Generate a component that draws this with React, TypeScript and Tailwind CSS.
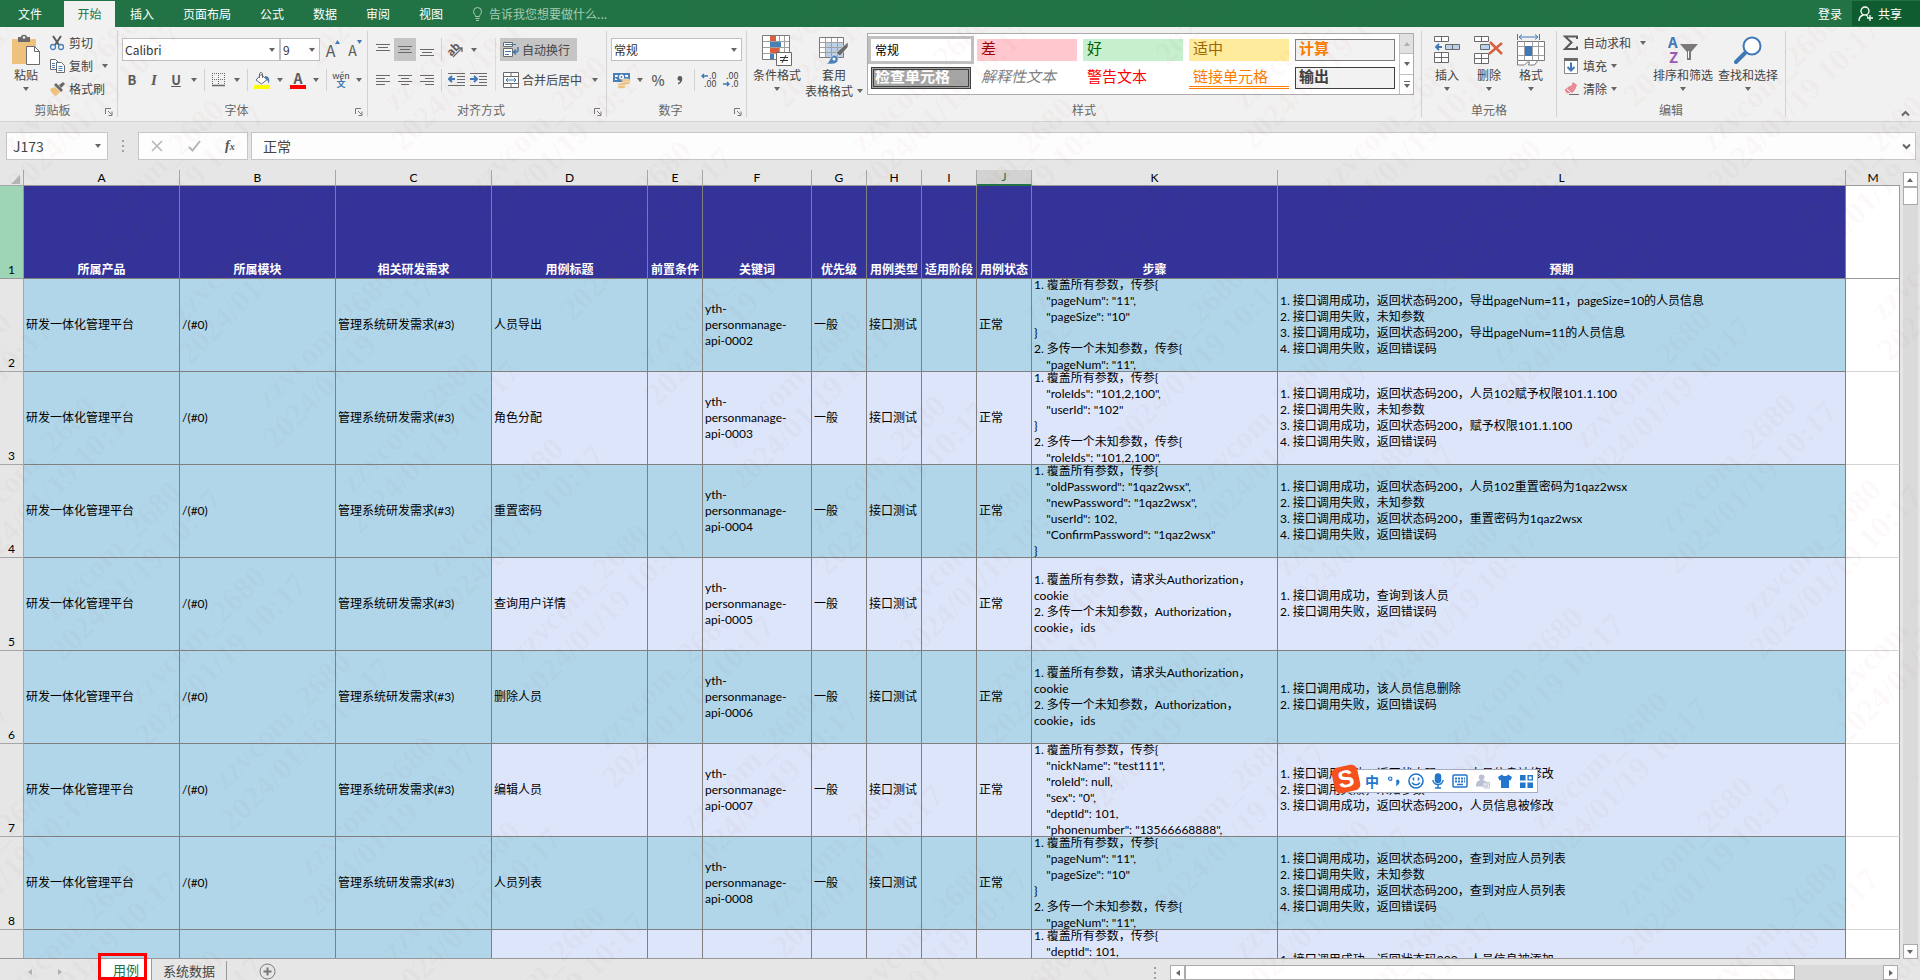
import React from 'react';

const TABS = ['插入', '页面布局', '公式', '数据', '审阅', '视图'];

const COLUMNS = [
  { letter: 'A', title: '所属产品', width: 'w-[156px]' },
  { letter: 'B', title: '所属模块', width: 'w-[156px]' },
  { letter: 'C', title: '相关研发需求', width: 'w-[156px]' },
  { letter: 'D', title: '用例标题', width: 'w-[156px]' },
  { letter: 'E', title: '前置条件', width: 'w-[55px]' },
  { letter: 'F', title: '关键词', width: 'w-[109px]' },
  { letter: 'G', title: '优先级', width: 'w-[55px]' },
  { letter: 'H', title: '用例类型', width: 'w-[55px]' },
  { letter: 'I', title: '适用阶段', width: 'w-[55px]' },
  { letter: 'J', title: '用例状态', width: 'w-[55px]' },
  { letter: 'K', title: '步骤', width: 'w-[246px]' },
  { letter: 'L', title: '预期', width: '' },
];

interface CaseRow {
  no: number;
  title: string;
  key: string;
  steps: string;
  expected: string;
}

const PAGE_STEPS = '1. 覆盖所有参数，传参{\n    "pageNum": "11",\n    "pageSize": "10"\n}\n2. 多传一个未知参数，传参{\n    "pageNum": "11",';
const AUTH_STEPS = '1. 覆盖所有参数，请求头Authorization，\ncookie\n2. 多传一个未知参数，Authorization，\ncookie，ids';

const ROWS: CaseRow[] = [
  {
    no: 2,
    title: '人员导出',
    key: '0002',
    steps: PAGE_STEPS,
    expected: '1. 接口调用成功，返回状态码200，导出pageNum=11，pageSize=10的人员信息\n2. 接口调用失败，未知参数\n3. 接口调用成功，返回状态码200，导出pageNum=11的人员信息\n4. 接口调用失败，返回错误码',
  },
  {
    no: 3,
    title: '角色分配',
    key: '0003',
    steps: '1. 覆盖所有参数，传参{\n    "roleIds": "101,2,100",\n    "userId": "102"\n}\n2. 多传一个未知参数，传参{\n    "roleIds": "101,2,100",',
    expected: '1. 接口调用成功，返回状态码200，人员102赋予权限101.1.100\n2. 接口调用失败，未知参数\n3. 接口调用成功，返回状态码200，赋予权限101.1.100\n4. 接口调用失败，返回错误码',
  },
  {
    no: 4,
    title: '重置密码',
    key: '0004',
    steps: '1. 覆盖所有参数，传参{\n    "oldPassword": "1qaz2wsx",\n    "newPassword": "1qaz2wsx",\n    "userId": 102,\n    "ConfirmPassword": "1qaz2wsx"\n}',
    expected: '1. 接口调用成功，返回状态码200，人员102重置密码为1qaz2wsx\n2. 接口调用失败，未知参数\n3. 接口调用成功，返回状态码200，重置密码为1qaz2wsx\n4. 接口调用失败，返回错误码',
  },
  {
    no: 5,
    title: '查询用户详情',
    key: '0005',
    steps: AUTH_STEPS,
    expected: '1. 接口调用成功，查询到该人员\n2. 接口调用失败，返回错误码',
  },
  {
    no: 6,
    title: '删除人员',
    key: '0006',
    steps: AUTH_STEPS,
    expected: '1. 接口调用成功，该人员信息删除\n2. 接口调用失败，返回错误码',
  },
  {
    no: 7,
    title: '编辑人员',
    key: '0007',
    steps: '1. 覆盖所有参数，传参{\n    "nickName": "test111",\n    "roleId": null,\n    "sex": "0",\n    "deptId": 101,\n    "phonenumber": "13566668888",',
    expected: '1. 接口调用成功，返回状态码200，人员信息被修改\n2. 接口调用失败，未知参数\n3. 接口调用成功，返回状态码200，人员信息被修改',
  },
  {
    no: 8,
    title: '人员列表',
    key: '0008',
    steps: PAGE_STEPS,
    expected: '1. 接口调用成功，返回状态码200，查到对应人员列表\n2. 接口调用失败，未知参数\n3. 接口调用成功，返回状态码200，查到对应人员列表\n4. 接口调用失败，返回错误码',
  },
  {
    no: 9,
    title: '添加人员',
    key: '',
    steps: '1. 覆盖所有参数，传参{\n    "deptId": 101,\n    "nickName": "test111",\n    "roleId": null,\n    "sex": "0",\n    "postIds": "1"',
    expected: '1. 接口调用成功，返回状态码200，人员信息被添加\n2. 接口调用失败，未知参数\n3. 接口调用成功，返回状态码200，人员信息被添加',
  },
];

/* ---------- small pieces ---------- */

const Caret: React.FC<{ light?: boolean }> = ({ light }) => (
  <svg width="6" height="4" viewBox="0 0 6 4" className={light ? 'text-[#b0b0b0]' : 'text-[#666666]'}>
    <path d="M0 0h6L3 4z" fill="currentColor" />
  </svg>
);

const CaretButton: React.FC<{ label: string }> = ({ label }) => (
  <button aria-label={label} className="flex h-full w-[14px] items-center justify-center">
    <Caret />
  </button>
);

const Sep: React.FC = () => <span className="mx-[3px] h-full w-px bg-[#d2d2d2]" />;

const Tool: React.FC<{ label: string; active?: boolean; children: React.ReactNode }> = ({ label, active, children }) => (
  <button
    aria-label={label}
    className={`flex h-full w-[22px] shrink-0 items-center justify-center ${active ? 'bg-[#c5c5c5]' : ''}`}
  >
    {children}
  </button>
);

interface GroupProps {
  name: string;
  width: string;
  launcher?: boolean;
  children: React.ReactNode;
}

const Group: React.FC<GroupProps> = ({ name, width, launcher, children }) => (
  <div className={`flex h-full shrink-0 items-start ${width}`}>
    <div className="flex h-full min-w-0 flex-1 flex-col">
      <div className="h-[75px]">{children}</div>
      <div className="flex h-4 items-center text-[#666666]">
        <span className="flex-1 text-center">{name}</span>
        {launcher && (
          <button aria-label={`${name}设置`} className="mr-1 mt-1">
            <svg width="8" height="8" viewBox="0 0 8 8" fill="none" stroke="#777" strokeWidth="1">
              <path d="M0.5 6V0.5H6M3 3l3.5 3.5M7 3.5V7.5H3.5" />
            </svg>
          </button>
        )}
      </div>
    </div>
    <span className="mt-1 h-[86px] w-px bg-[#d2d2d2]" />
  </div>
);

interface BigButtonProps {
  label: string;
  width: string;
  icon: React.ReactNode;
}

const BigButton: React.FC<BigButtonProps> = ({ label, width, icon }) => (
  <button className={`flex shrink-0 flex-col items-center pt-[6px] ${width}`}>
    <span className="flex h-[34px] items-center justify-center">{icon}</span>
    <span className="whitespace-nowrap">{label}</span>
    <span className="flex h-3 items-center">
      <Caret />
    </span>
  </button>
);

const SmallButton: React.FC<{ label: string; icon: React.ReactNode; caret?: 'near' | 'far' }> = ({ label, icon, caret }) => (
  <button className="flex h-[23px] items-center whitespace-nowrap">
    <span className="mr-[3px] flex w-[18px] justify-center">{icon}</span>
    {label}
    {caret && (
      <span className={caret === 'far' ? 'ml-[9px]' : 'ml-1'}>
        <Caret />
      </span>
    )}
  </button>
);

const Select: React.FC<{ label: string; value: string; width: string }> = ({ label, value, width }) => (
  <div className={`relative h-[23px] border border-[#c0c0c0] bg-white ${width}`}>
    <select aria-label={label} defaultValue={value} className="h-full w-full appearance-none bg-transparent pl-[2px] text-xs text-[#333333] outline-none">
      <option>{value}</option>
    </select>
    <span className="pointer-events-none absolute inset-y-0 right-1 flex items-center">
      <Caret />
    </span>
  </div>
);

const Lines: React.FC<{ d: string }> = ({ d }) => (
  <svg width="16" height="16" viewBox="0 0 16 16" fill="none" stroke="#6a6a6a">
    <path d={d} />
  </svg>
);

/* ---------- ribbon icons ---------- */

const PasteIcon = () => (
  <svg width="30" height="32" viewBox="0 0 30 32" fill="none">
    <path d="M1 5h24v25H1z" fill="#eec17c" />
    <path d="M7 3h3c0-3 6-3 6 0h3v5H7z" fill="#6a6a6a" />
    <circle cx="13" cy="3.5" r="1.3" fill="#f1f1f1" />
    <path d="M15.5 12.5h8l5 5v13h-13z" fill="#fff" stroke="#6a6a6a" />
    <path d="M23.5 12.5v5h5" stroke="#6a6a6a" />
  </svg>
);

const CutIcon = () => (
  <svg width="16" height="16" viewBox="0 0 16 16" fill="none">
    <path d="M4 1l6 9M12 1L6 10" stroke="#5a5a5a" strokeWidth="2" />
    <circle cx="4" cy="12" r="2.5" stroke="#4a80b8" strokeWidth="1.3" />
    <circle cx="12" cy="12" r="2.5" stroke="#4a80b8" strokeWidth="1.3" />
  </svg>
);

const CopyIcon = () => (
  <svg width="16" height="16" viewBox="0 0 16 16" fill="#fff" stroke="#6a6a6a">
    <path d="M1.5 1.5h5l3 3v7h-8z" />
    <path d="M3 5.5h3M3 7.5h3M3 9.5h3" stroke="#4a80b8" />
    <path d="M7.5 4.5h5l3 3v7h-8z" />
    <path d="M9.5 8.5h4M9.5 10.5h4M9.5 12.5h4" stroke="#4a80b8" />
  </svg>
);

const BrushIcon = () => (
  <svg width="16" height="16" viewBox="0 0 16 16">
    <path d="M1 8l5-2 5 5-4 4c-3-1-5-4-6-7z" fill="#eec17c" />
    <path d="M5 4l2-2 7 7-2 2z" fill="#6a6a6a" />
    <path d="M10 4l4-3 2 2-4 4z" fill="#6a6a6a" />
  </svg>
);

const BordersIcon = () => (
  <svg width="14" height="14" viewBox="0 0 14 14" fill="none" stroke="#6a6a6a">
    <path d="M0.5 0v13M6.5 0v13M12.5 0v13M0 0.5h13M0 6.5h13" strokeDasharray="1 1" />
    <path d="M0 12.5h13" strokeWidth="1.5" />
  </svg>
);

const FillIcon = () => (
  <svg width="17" height="17" viewBox="0 0 17 17" fill="none">
    <path d="M7 2.5l6 5-5.5 4.5L2 8z" fill="#fff" stroke="#6a6a6a" />
    <path d="M5.5 6V2c0-2 3-2 3 0v4" stroke="#6a6a6a" />
    <path d="M11 4c4 0 5 3 4 8-1-3-2-5-4-5z" fill="#4a80b8" />
    <path d="M0 13h16v4H0z" fill="#ffff00" />
  </svg>
);

const FontColorIcon = () => (
  <span className="flex w-4 flex-col items-center border-b-4 border-[#ff0000] text-sm leading-[13px] font-bold text-[#5a5a5a]">A</span>
);

const PhoneticIcon = () => (
  <span className="flex flex-col items-center text-[9px] leading-[8px] text-[#444444]">
    wén
    <span className="font-bold text-[#3f78b5]">文</span>
  </span>
);

const OrientationIcon = () => (
  <svg width="18" height="18" viewBox="0 0 18 18">
    <text x="1" y="12" fontSize="11" fontWeight="700" fill="#5a5a5a" transform="rotate(-45 7 10)">ab</text>
    <path d="M6 16L15 7M11 7h4v4" fill="none" stroke="#6a6a6a" strokeWidth="1.3" />
  </svg>
);

const IndentIcon: React.FC<{ right?: boolean }> = ({ right }) => (
  <svg width="17" height="16" viewBox="0 0 17 16" fill="none" stroke="#6a6a6a">
    <path d="M0 1.5h17M9 4.5h8M9 7.5h8M9 10.5h8M0 13.5h17" />
    <path d={right ? 'M0 7h6M4 4l3 3-3 3' : 'M1 7h6M4 4L1 7l3 3'} stroke="#3f78b5" strokeWidth="2" />
  </svg>
);

const WrapIcon = () => (
  <svg width="16" height="16" viewBox="0 0 16 16" fill="none" stroke="#6a6a6a">
    <path d="M0.5 0.5h9v4h-9zM0.5 6.5h9v8h-9z" fill="#fff" />
    <path d="M2 2.5h11M2 9.5h6M2 12.5h4" stroke="#3f78b5" />
    <path d="M15 5v3c0 2-1 2-4 2M13 7.5L10.5 10l2.5 2.5" stroke="#3f78b5" strokeWidth="1.5" />
  </svg>
);

const MergeIcon = () => (
  <svg width="16" height="16" viewBox="0 0 16 16" fill="#fff" stroke="#6a6a6a">
    <path d="M0.5 0.5h15v15h-15zM0.5 4.5h15M0.5 11.5h15M8 0.5v4M8 11.5v4" />
    <path d="M3 8h10M5 6L3 8l2 2M11 6l2 2-2 2" fill="none" stroke="#3f78b5" />
  </svg>
);

const CurrencyIcon = () => (
  <svg width="18" height="17" viewBox="0 0 18 17">
    <path d="M0 1h17v9H0z" fill="#4a80b8" />
    <path d="M2 3h3c0 2-1 2-3 2zM15 3h-3c0 2 1 2 3 2zM2 8V6l3 2z" fill="#fff" />
    <circle cx="8.5" cy="5" r="2.5" fill="#fff" />
    <circle cx="8.5" cy="5" r="1" fill="#4a80b8" />
    <ellipse cx="13" cy="8.5" rx="4" ry="1.7" fill="#eec17c" stroke="#f1f1f1" strokeWidth="0.6" />
    <ellipse cx="13" cy="11" rx="4" ry="1.7" fill="#eec17c" stroke="#f1f1f1" strokeWidth="0.6" />
    <ellipse cx="8.5" cy="12.5" rx="4" ry="1.7" fill="#eec17c" stroke="#f1f1f1" strokeWidth="0.6" />
    <ellipse cx="8.5" cy="15" rx="4" ry="1.7" fill="#eec17c" stroke="#f1f1f1" strokeWidth="0.6" />
  </svg>
);

const DecimalIcon: React.FC<{ less?: boolean }> = ({ less }) => (
  <svg width="16" height="16" viewBox="0 0 16 16" fontSize="9" fill="#444">
    <text x={less ? 3 : 8} y="7">{less ? '.00' : '.0'}</text>
    <text x={less ? 8 : 3} y="15">{less ? '.0' : '.00'}</text>
    <path d={less ? 'M0 12h6M4 10l2 2-2 2' : 'M1 4h6M3 2L1 4l2 2'} fill="none" stroke="#3f78b5" strokeWidth="1.4" />
  </svg>
);

const ConditionalIcon = () => (
  <svg width="30" height="31" viewBox="0 0 30 31" fill="none">
    <path d="M0.5 0.5h27v24h-27z" fill="#fff" stroke="#7a7a7a" />
    <path d="M8.5 1v23M17.5 1v23M22.5 1v23M1 6.5h26M1 12.5h26M1 18.5h26" stroke="#a0a0a0" />
    <path d="M8 1h6v5H8zM8 13h9v5H8z" fill="#d9603f" />
    <path d="M8 7h11v5H8zM8 19h4v5H8z" fill="#4a80b8" />
    <path d="M14.5 17.5h15v13h-15z" fill="#fff" stroke="#6a6a6a" />
    <path d="M18 22.5h8M18 25.5h8M24 20l-4 8" stroke="#333" />
  </svg>
);

const TableFormatIcon = () => (
  <svg width="30" height="30" viewBox="0 0 30 30" fill="none">
    <path d="M0.5 2.5h24v20h-24z" fill="#fff" stroke="#7a7a7a" />
    <path d="M7 8h17v14H7z" fill="#bcd2ea" />
    <path d="M6.5 3v19M12.5 3v19M18.5 3v19M1 7.5h23M1 12.5h23M1 17.5h23" stroke="#a0a0a0" />
    <path d="M29 7v5l-8 9-4-3z" fill="#6a6a6a" stroke="#f1f1f1" strokeWidth="0.6" />
    <path d="M7 29c4-1 4-9 9-9 5 2 4 9-3 9z" fill="#4a80b8" stroke="#f1f1f1" strokeWidth="0.6" />
    <circle cx="15" cy="24" r="1.5" fill="#fff" />
  </svg>
);

const InsertIcon = () => (
  <svg width="26" height="28" viewBox="0 0 26 28" fill="#fff" stroke="#6a6a6a">
    <path d="M0.5 0.5h14v5h-14zM7.5 0.5v5M0.5 16.5h14v10h-14zM7.5 16.5v10M0.5 21.5h14" />
    <path d="M11.5 8.5h14v5h-14zM18.5 8.5v5" fill="#bcd2ea" />
    <path d="M2 11h6M5 8l-3 3 3 3" fill="none" stroke="#3f78b5" strokeWidth="1.8" />
  </svg>
);

const DeleteIcon = () => (
  <svg width="30" height="28" viewBox="0 0 30 28" fill="#fff" stroke="#6a6a6a">
    <path d="M0.5 0.5h14v5h-14zM7.5 0.5v5M0.5 17.5h14v10h-14zM7.5 17.5v10M0.5 22.5h14" />
    <path d="M6.5 8.5h9v5h-9z" fill="#bcd2ea" />
    <path d="M16 6l12 12M28 7L15 18" fill="none" stroke="#d9603f" strokeWidth="2.5" />
  </svg>
);

const FormatIcon = () => (
  <svg width="28" height="32" viewBox="0 0 28 32" fill="#fff" stroke="#7a7a7a">
    <path d="M0.5 7.5h27v19h-27z" />
    <path d="M7.5 7.5v19M15.5 7.5v19M21.5 7.5v19M0.5 12.5h27M0.5 21.5h27" stroke="#a0a0a0" />
    <path d="M8 12h7v10H8z" fill="#3f78b5" stroke="none" />
    <path d="M0.5 27v4h7l3-3h2l-1 3h6l3-4" />
    <path d="M0.5 0v6M22.5 0v6M2 3h19M5 0.5L2 3l3 2.5M18 0.5L21 3l-3 2.5" fill="none" stroke="#3f78b5" />
  </svg>
);

const SumIcon = () => (
  <svg width="16" height="16" viewBox="0 0 16 16" fill="none" stroke="#5a5a5a" strokeWidth="2">
    <path d="M14 4V1.5H2l6.5 6L2 14h12v-2.5" />
  </svg>
);

const FillDownIcon = () => (
  <svg width="14" height="16" viewBox="0 0 14 16" fill="none">
    <path d="M0.5 0.5h13v15h-13z" fill="#fff" stroke="#8a8a8a" />
    <path d="M0 0h14v3H0z" fill="#6a6a6a" />
    <path d="M7 4.5v8M3.5 9L7 12.5 10.5 9" stroke="#3f78b5" strokeWidth="2" />
  </svg>
);

const EraserIcon = () => (
  <svg width="15" height="15" viewBox="0 0 15 15">
    <path d="M9 1l4 3-2 5-4-3.5z" fill="#e88a96" />
    <path d="M6 4.5l5 4-2 3-6 1L0.5 9z" fill="#e88a96" />
    <path d="M3 8l4 4" stroke="#fff" />
    <path d="M5 13.5h10" stroke="#6a6a6a" />
  </svg>
);

const SortIcon = () => (
  <svg width="30" height="30" viewBox="0 0 30 30" fontSize="15" fontWeight="700">
    <text x="0" y="13" fill="#3f78b5">A</text>
    <text x="1" y="28" fill="#9b59b6">Z</text>
    <path d="M12 9h18l-7 8v8h-4v-8z" fill="#7a7a7a" />
    <path d="M20.5 16v7" stroke="#fff" />
  </svg>
);

const FindIcon = () => (
  <svg width="28" height="28" viewBox="0 0 28 28" fill="none">
    <path d="M11 17l-9 9" stroke="#3f78b5" strokeWidth="4" strokeLinecap="round" />
    <circle cx="18" cy="10" r="8.5" fill="#fff" stroke="#3f78b5" strokeWidth="2" />
  </svg>
);

/* ---------- sections ---------- */

const TitleTabs: React.FC = () => (
  <header className="flex h-[27px] shrink-0 items-stretch bg-[#217346] pt-px text-xs text-white">
    <button className="w-16 pr-1">文件</button>
    <button className="w-[51px] bg-[#f1f1f1] text-[#217346]">开始</button>
    <nav className="flex gap-px pl-px">
      {TABS.map((tab) => (
        <button key={tab} className="px-[14px]">
          {tab}
        </button>
      ))}
    </nav>
    <label className="ml-4 flex items-center gap-[7px]">
      <svg width="9" height="14" viewBox="0 0 9 14" fill="none" stroke="#a6cdb6">
        <path d="M2.5 9.5C2.5 7.5 0.5 7 0.5 4.5a4 4 0 018 0c0 2.5-2 3-2 5zM2.5 11.5h4M3 13.5h3" />
      </svg>
      <input aria-label="告诉我" placeholder="告诉我您想要做什么..." className="w-40 bg-transparent outline-none placeholder:text-[#a6cdb6]" />
    </label>
    <div className="ml-auto flex items-stretch">
      <button className="px-[10px]">登录</button>
      <button className="mb-px flex w-[68px] items-center gap-1 bg-[#0e5c2f] pl-[6px]">
        <svg width="16" height="16" viewBox="0 0 16 16" fill="none" stroke="#fff" strokeWidth="1.3">
          <circle cx="7" cy="5" r="4" />
          <path d="M5.5 9C3 9.5 1 12 1 15M8 9l2 1.5M12 9v6M9 12h6" />
        </svg>
        共享
      </button>
    </div>
  </header>
);

const ClipboardGroup: React.FC = () => (
  <Group name="剪贴板" width="w-[118px]" launcher>
    <div className="flex">
      <BigButton label="粘贴" width="w-12 pl-1" icon={<PasteIcon />} />
      <div className="flex flex-col pt-1">
        <SmallButton label="剪切" icon={<CutIcon />} />
        <SmallButton label="复制" icon={<CopyIcon />} caret="far" />
        <SmallButton label="格式刷" icon={<BrushIcon />} />
      </div>
    </div>
  </Group>
);

const FontGroup: React.FC = () => (
  <Group name="字体" width="w-[250px]" launcher>
    <div className="flex flex-col gap-2 pt-[11px] pl-[3px] text-[#5a5a5a]">
      <div className="flex h-[23px] items-center pl-px">
        <Select label="字体" value="Calibri" width="w-[158px]" />
        <Select label="字号" value="9" width="w-10" />
        <Tool label="增大字号">
          <span className="flex items-start pl-1 text-base leading-5">
            A<svg width="5" height="4" viewBox="0 0 5 4"><path d="M0 4h5L2.5 0z" fill="#3f78b5" /></svg>
          </span>
        </Tool>
        <Tool label="减小字号">
          <span className="flex items-start pl-1 text-sm leading-5">
            A<svg width="5" height="4" viewBox="0 0 5 4"><path d="M0 0h5L2.5 4z" fill="#3f78b5" /></svg>
          </span>
        </Tool>
      </div>
      <div className="flex h-[22px] items-center">
        <Tool label="加粗"><b className="text-[13px]">B</b></Tool>
        <Tool label="倾斜"><i className="font-['Liberation_Serif',serif] text-[15px] font-bold">I</i></Tool>
        <Tool label="下划线"><span className="text-[13px] font-bold underline">U</span></Tool>
        <CaretButton label="下划线选项" />
        <Sep />
        <Tool label="边框"><BordersIcon /></Tool>
        <CaretButton label="边框选项" />
        <Sep />
        <Tool label="填充颜色"><FillIcon /></Tool>
        <CaretButton label="填充颜色选项" />
        <Tool label="字体颜色"><FontColorIcon /></Tool>
        <CaretButton label="字体颜色选项" />
        <Sep />
        <Tool label="拼音"><PhoneticIcon /></Tool>
        <CaretButton label="拼音选项" />
      </div>
    </div>
  </Group>
);

const AlignGroup: React.FC = () => (
  <Group name="对齐方式" width="w-[239px]" launcher>
    <div className="flex pt-[11px] pl-1">
      <div className="flex w-[123px] flex-col gap-2">
        <div className="flex h-[23px] items-center">
          <Tool label="顶端对齐"><Lines d="M1 2.5h14M3 5.5h10M1 8.5h14" /></Tool>
          <Tool label="垂直居中" active><Lines d="M1 4.5h14M3 7.5h10M1 10.5h14" /></Tool>
          <Tool label="底端对齐"><Lines d="M1 7.5h14M3 10.5h10M1 13.5h14" /></Tool>
          <Sep />
          <Tool label="方向"><OrientationIcon /></Tool>
          <CaretButton label="方向选项" />
        </div>
        <div className="flex h-[22px] items-center">
          <Tool label="左对齐"><Lines d="M1 3.5h14M1 6.5h9M1 9.5h14M1 12.5h9" /></Tool>
          <Tool label="居中"><Lines d="M1 3.5h14M4 6.5h8M1 9.5h14M4 12.5h8" /></Tool>
          <Tool label="右对齐"><Lines d="M1 3.5h14M6 6.5h9M1 9.5h14M6 12.5h9" /></Tool>
          <Sep />
          <Tool label="减少缩进量"><IndentIcon /></Tool>
          <Tool label="增加缩进量"><IndentIcon right /></Tool>
        </div>
      </div>
      <span className="mr-1 h-[53px] w-px bg-[#dcdcdc]" />
      <div className="flex flex-col gap-2">
        <button className="flex h-[23px] w-[77px] items-center gap-[3px] bg-[#c5c5c5] pl-[3px]">
          <WrapIcon />
          自动换行
        </button>
        <button className="flex h-[22px] items-center gap-[3px] pl-[3px] whitespace-nowrap">
          <MergeIcon />
          合并后居中
          <span className="ml-[7px]"><Caret /></span>
        </button>
      </div>
    </div>
  </Group>
);

const NumberGroup: React.FC = () => (
  <Group name="数字" width="w-[140px]" launcher>
    <div className="flex flex-col gap-2 pt-[11px] pl-1 text-[#5a5a5a]">
      <Select label="数字格式" value="常规" width="w-[131px]" />
      <div className="flex h-[22px] items-center">
        <Tool label="会计数字格式"><CurrencyIcon /></Tool>
        <CaretButton label="会计数字格式选项" />
        <Tool label="百分比样式"><span className="text-sm font-medium">%</span></Tool>
        <Tool label="千位分隔样式">
          <svg width="6" height="9" viewBox="0 0 6 9" fill="#5a5a5a">
            <path d="M0.5 2.5a2.3 2.3 0 014.8 0c0 3-1.5 5-4.3 6V7c1.2-.5 2-1.3 2-2.2C1.5 4.8.5 3.8.5 2.5z" />
          </svg>
        </Tool>
        <Sep />
        <Tool label="增加小数位数"><DecimalIcon /></Tool>
        <Tool label="减少小数位数"><DecimalIcon less /></Tool>
      </div>
    </div>
  </Group>
);

const STYLES = [
  { name: '常规', look: 'bg-white px-1 pt-[2px] text-xs text-black ring-3 ring-[#c0c0c0]' },
  { name: '差', look: 'bg-[#ffc7ce] px-1 text-[15px] text-[#9c0006]' },
  { name: '好', look: 'bg-[#c6efce] px-1 text-[15px] text-[#006100]' },
  { name: '适中', look: 'bg-[#ffeb9c] px-1 text-[15px] text-[#9c6500]' },
  { name: '计算', look: 'bg-[#f2f2f2] px-1 text-[15px] font-bold text-[#fa7d00] outline -outline-offset-1 outline-[#7f7f7f]' },
  { name: '检查单元格', look: 'bg-[#a5a5a5] px-1 text-[15px] font-bold text-white outline-3 -outline-offset-3 outline-[#3f3f3f] outline-double' },
  { name: '解释性文本', look: 'px-1 text-[15px] text-[#7f7f7f] italic' },
  { name: '警告文本', look: 'px-1 text-[15px] text-[#ff0000]' },
  { name: '链接单元格', look: 'border-b-3 border-double border-[#ff8001] px-1 text-[15px] text-[#fa7d00]' },
  { name: '输出', look: 'bg-[#f2f2f2] px-1 text-[15px] font-bold text-[#3f3f3f] outline -outline-offset-1 outline-[#3f3f3f]' },
];

const StyleGroup: React.FC = () => (
  <Group name="样式" width="w-[675px]">
    <div className="flex pl-1">
      <BigButton label="条件格式" width="w-[52px]" icon={<ConditionalIcon />} />
      <button className="flex w-[62px] flex-col items-center pt-[6px]">
        <span className="flex h-[34px] items-center"><TableFormatIcon /></span>
        <span>套用</span>
        <span className="flex items-center gap-1 whitespace-nowrap">表格格式<Caret /></span>
      </button>
      <div className="mt-[6px] ml-[2px] flex h-[62px] border border-[#ababab] bg-white">
        <div className="grid grid-cols-[repeat(5,100px)] content-start gap-[6px] px-[3px] pt-[5px] pr-[4px]">
          {STYLES.map((s) => (
            <button key={s.name} className={`flex h-[22px] items-start leading-[18px] whitespace-nowrap ${s.look}`}>
              {s.name}
            </button>
          ))}
        </div>
        <div className="flex w-[14px] flex-col border-l border-[#c0c0c0]">
          <button aria-label="上一行" className="flex flex-1 items-center justify-center bg-[#e1e1e1]">
            <span className="rotate-180"><Caret light /></span>
          </button>
          <button aria-label="下一行" className="flex flex-1 items-center justify-center border-y border-[#c0c0c0]"><Caret /></button>
          <button aria-label="其他" className="flex flex-1 flex-col items-center justify-center gap-[2px]">
            <span className="h-px w-[6px] bg-[#666666]" />
            <Caret />
          </button>
        </div>
      </div>
    </div>
  </Group>
);

const Ribbon: React.FC = () => (
  <section className="flex h-[95px] shrink-0 border-b border-[#d2d2d2] bg-[#f1f1f1] text-xs leading-4 text-[#444444]">
    <ClipboardGroup />
    <FontGroup />
    <AlignGroup />
    <NumberGroup />
    <StyleGroup />
    <Group name="单元格" width="w-[135px]">
      <div className="flex pl-1">
        <BigButton label="插入" width="w-[42px]" icon={<InsertIcon />} />
        <BigButton label="删除" width="w-[42px]" icon={<DeleteIcon />} />
        <BigButton label="格式" width="w-[42px]" icon={<FormatIcon />} />
      </div>
    </Group>
    <Group name="编辑" width="w-[229px]">
      <div className="flex pl-[5px]">
        <div className="flex w-[87px] flex-col pt-1">
          <SmallButton label="自动求和" icon={<SumIcon />} caret="far" />
          <SmallButton label="填充" icon={<FillDownIcon />} caret="near" />
          <SmallButton label="清除" icon={<EraserIcon />} caret="near" />
        </div>
        <BigButton label="排序和筛选" width="w-[68px]" icon={<SortIcon />} />
        <BigButton label="查找和选择" width="w-[62px]" icon={<FindIcon />} />
      </div>
    </Group>
    <button aria-label="折叠功能区" className="mt-auto mr-[10px] mb-1 ml-auto">
      <svg width="9" height="7" viewBox="0 0 9 7" fill="none" stroke="#666" strokeWidth="2">
        <path d="M1 5.5L4.5 2 8 5.5" />
      </svg>
    </button>
  </section>
);

const FormulaBar: React.FC = () => (
  <section className="flex h-12 shrink-0 items-center pr-1 pl-[6px] text-sm text-[#444444]">
    <div className="relative h-7 w-[102px] border border-[#c6c6c6] bg-[#fdfdfd]">
      <input aria-label="名称框" defaultValue="J173" className="h-full w-full bg-transparent pl-[6px] outline-none" />
      <span className="absolute inset-y-0 right-[6px] flex items-center"><Caret /></span>
    </div>
    <svg width="30" height="14" viewBox="0 0 30 14" fill="#a0a0a0">
      <path d="M14 1h2v2h-2zM14 6h2v2h-2zM14 11h2v2h-2z" />
    </svg>
    <div className="flex h-7 w-[110px] items-center justify-around border border-[#c6c6c6] bg-[#fdfdfd]">
      <button aria-label="取消">
        <svg width="12" height="12" viewBox="0 0 12 12" stroke="#b5b5b5" strokeWidth="1.5"><path d="M1 1l10 10M11 1L1 11" /></svg>
      </button>
      <button aria-label="输入">
        <svg width="13" height="12" viewBox="0 0 13 12" fill="none" stroke="#b5b5b5" strokeWidth="2"><path d="M1 7l3.5 3.5L12 1" /></svg>
      </button>
      <button aria-label="插入函数" className="font-['Liberation_Serif',serif] font-bold text-[#555555] italic">
        f<span className="text-[10px]">x</span>
      </button>
    </div>
    <div className="ml-[3px] flex h-7 flex-1 items-center border border-[#c6c6c6] bg-[#fdfdfd]">
      <input aria-label="编辑栏" defaultValue="正常" className="h-full min-w-0 flex-1 bg-transparent pl-[11px] outline-none" />
      <button aria-label="展开编辑栏" className="mr-1">
        <svg width="9" height="7" viewBox="0 0 9 7" fill="none" stroke="#666" strokeWidth="2"><path d="M1 1.5L4.5 5 8 1.5" /></svg>
      </button>
    </div>
  </section>
);

const Cell: React.FC<{ text?: string; blue?: boolean }> = ({ text, blue }) => (
  <td className={`border-r border-b border-[#808080] p-0 ${blue ? 'bg-[#b1d6ea]' : 'bg-[#dde5fa]'}`}>
    <div className="flex h-[92px] flex-col justify-center overflow-hidden pl-[2px] whitespace-pre">
      <div className="shrink-0">{text}</div>
    </div>
  </td>
);

const Sheet: React.FC = () => (
  <div className="min-w-0 flex-1 overflow-hidden border-b border-[#999999]">
    <table className="w-full table-fixed border-separate border-spacing-0 font-['Lato','Noto_Sans_CJK_SC',sans-serif] text-xs leading-4 text-black">
      <colgroup>
        <col className="w-6" />
        {COLUMNS.map((c) => (
          <col key={c.letter} className={c.width} />
        ))}
        <col className="w-[54px]" />
      </colgroup>
      <thead>
        <tr className="h-4">
          <th className="h-4 border-r border-b border-[#a6a6a6] p-0" aria-label="全选">
            <svg width="9" height="9" viewBox="0 0 9 9" className="mt-[3px] mr-[3px] ml-auto"><path d="M9 0v9H0z" fill="#b4b4b4" /></svg>
          </th>
          {COLUMNS.map((c) => (
            <th
              key={c.letter}
              className={`h-4 border-r border-r-[#a6a6a6] p-0 font-normal leading-[14px] ${
                c.letter === 'J' ? 'border-b-2 border-b-[#217346] bg-[#d2d2d2] text-[#217346]' : 'border-b border-b-[#999999]'
              }`}
            >
              {c.letter}
            </th>
          ))}
          <th className="h-4 border-b border-[#999999] p-0 font-normal leading-[14px]">M</th>
        </tr>
        <tr>
          <th className="border-r border-b border-[#999999] bg-[#9fd5b7] p-0 align-bottom font-normal">1</th>
          {COLUMNS.map((c) => (
            <th key={c.letter} className="border-r border-b border-[#808080] bg-[#333399] p-0 align-bottom font-bold text-white">
              <div className="flex h-[92px] items-end justify-center whitespace-nowrap">{c.title}</div>
            </th>
          ))}
          <td className="border-r border-b border-[#999999] bg-white" />
        </tr>
      </thead>
      <tbody>
        {ROWS.map((row) => {
          const blue = row.no % 2 === 0;
          return (
            <tr key={row.no}>
              <th className="border-r border-b border-[#a6a6a6] p-0 align-bottom font-normal">{row.no}</th>
              <Cell blue text="研发一体化管理平台" />
              <Cell blue text="/(#0)" />
              <Cell blue text="管理系统研发需求(#3)" />
              <Cell blue={blue} text={row.title} />
              <Cell blue={blue} />
              <Cell blue={blue} text={row.key && `yth-\npersonmanage-\napi-${row.key}`} />
              <Cell blue={blue} text="一般" />
              <Cell blue={blue} text="接口测试" />
              <Cell blue={blue} />
              <Cell blue={blue} text="正常" />
              <Cell blue={blue} text={row.steps} />
              <Cell blue={blue} text={row.expected} />
              <td className="border-r border-b border-r-[#999999] border-b-[#d4d4d4] bg-white" />
            </tr>
          );
        })}
      </tbody>
    </table>
  </div>
);

const ScrollButton: React.FC<{ label: string; turn: string }> = ({ label, turn }) => (
  <button aria-label={label} className="flex h-[15px] w-[15px] shrink-0 items-center justify-center border border-[#ababab] bg-white">
    <span className={turn}><Caret /></span>
  </button>
);

const VerticalScroll: React.FC = () => (
  <div className="flex w-5 shrink-0 flex-col items-center pt-[2px]">
    <ScrollButton label="向上滚动" turn="rotate-180" />
    <div className="w-[15px] flex-1 bg-[#dadada]">
      <div className="h-[18px] border border-[#ababab] bg-white" />
    </div>
    <ScrollButton label="向下滚动" turn="" />
  </div>
);

const SheetTabs: React.FC = () => (
  <footer className="flex h-[21px] shrink-0 text-[13px] text-[#444444]">
    <div className="flex w-[101px] items-center gap-6 pt-1 pl-[27px]">
      <span className="rotate-90"><Caret light /></span>
      <span className="-rotate-90"><Caret light /></span>
    </div>
    <div className="relative">
      <button className="h-full w-[51px] border-r border-[#999999] bg-white text-[#217346]">用例</button>
      <span className="absolute -top-[6px] -left-[3px] h-[27px] w-[49px] border-3 border-[#ff0000]" />
    </div>
    <button className="mt-[2px] w-[75px] border-r border-[#999999] leading-4">系统数据</button>
    <button aria-label="新工作表" className="ml-[32px] pt-1">
      <svg width="17" height="17" viewBox="0 0 17 17" fill="none" stroke="#777">
        <circle cx="8.5" cy="8.5" r="7.5" />
        <path d="M8.5 4.5v8M4.5 8.5h8" strokeWidth="2" />
      </svg>
    </button>
    <div className="ml-auto flex w-[766px] items-end pr-[22px]">
      <svg width="16" height="14" viewBox="0 0 16 14" fill="#a0a0a0" className="mr-auto">
        <path d="M0 1h2v2H0zM0 6h2v2H0zM0 11h2v2H0z" />
      </svg>
      <div className="flex w-[728px]">
        <ScrollButton label="向左滚动" turn="rotate-90" />
        <div className="flex-1 bg-[#dadada]">
          <div className="h-full w-[610px] border border-[#ababab] bg-white" />
        </div>
        <ScrollButton label="向右滚动" turn="-rotate-90" />
      </div>
    </div>
  </footer>
);

const InputMethodBar: React.FC = () => (
  <div className="absolute top-[765px] left-[1333px] flex items-center text-[#2277cc]">
    <span className="z-10 flex h-[26px] w-[26px] -rotate-12 items-center justify-center rounded-md bg-[#f4511e] font-['Liberation_Sans',sans-serif] text-2xl leading-6 font-bold text-white">
      S
    </span>
    <div className="-ml-3 mt-1 flex h-6 items-center gap-2 border border-[#a5adc0] bg-white pr-1 pl-[17px]">
      <span className="text-sm leading-5 font-bold">中</span>
      <svg width="13" height="14" viewBox="0 0 14 14" fill="none" stroke="currentColor">
        <circle cx="3.5" cy="4.5" r="1.8" strokeWidth="1.3" />
        <path d="M10 7.5a1.5 1.5 0 113 0c0 2-1 3.5-3 4.5" fill="currentColor" />
      </svg>
      <svg width="16" height="16" viewBox="0 0 16 16" fill="none" stroke="currentColor" strokeWidth="1.6">
        <circle cx="8" cy="8" r="7" />
        <path d="M5.5 4.5v3M10.5 4.5v3M4 9.5c1.5 3 6.5 3 8 0" />
      </svg>
      <svg width="12" height="16" viewBox="0 0 12 16" fill="none" stroke="currentColor" strokeWidth="1.5">
        <rect x="3.5" y="1" width="5" height="8.5" rx="2.5" fill="currentColor" />
        <path d="M1 7c0 6 10 6 10 0M6 11.5V15M3 15h6" />
      </svg>
      <svg width="16" height="14" viewBox="0 0 16 14" fill="none" stroke="currentColor" strokeWidth="1.5">
        <rect x="1" y="1" width="14" height="12" rx="1" />
        <path d="M3 4.5h10M3 7.5h10" strokeDasharray="2 1" strokeWidth="1.8" />
        <path d="M5 10.5h6" />
      </svg>
      <svg width="14" height="16" viewBox="0 0 15 16" fill="#b9c0d3">
        <circle cx="6" cy="4" r="3" />
        <path d="M0 14c0-6 3-7 6-7s5 1 5 3H8v4z" />
        <path d="M8.5 9.5h6v6h-6z" fill="#fff" stroke="#b9c0d3" />
        <path d="M10 11h3v1.5h-3V14h3" fill="none" stroke="#b9c0d3" />
      </svg>
      <svg width="14" height="14" viewBox="0 0 14 14" fill="currentColor">
        <path d="M4 0.5c1 2 5 2 6 0l4 2.5-1.5 3.5L11 6v8H3V6l-1.5 0.5L0 3z" />
      </svg>
      <svg width="13" height="13" viewBox="0 0 14 14" fill="currentColor">
        <path d="M0 0h6v6H0zM0 8h6v6H0zM8 8h6v6H8z" />
        <path d="M8.75 0.75h4.5v4.5h-4.5z" fill="none" stroke="currentColor" strokeWidth="1.5" />
      </svg>
    </div>
  </div>
);

// 8 columns x 18 rows of stamps on a diagonal grid, corners left empty
const STAMPS = Array.from({ length: 144 }, (_, i) => {
  const u = -612 + 301 * (i % 8);
  const v = 5 + 120 * Math.floor(i / 8);
  const x = (u + v) * Math.SQRT1_2;
  const y = (v - u) * Math.SQRT1_2;
  return x > -100 && x < 2020 && y > -100 && y < 1080;
});

const Watermark: React.FC = () => (
  <div aria-hidden="true" className="pointer-events-none absolute inset-0 overflow-hidden select-none">
    <div className="absolute top-0 left-0 h-0 w-0 origin-top-left -rotate-45">
      <div className="-mt-[55px] -ml-[762px] grid w-[2408px] auto-rows-[120px] grid-cols-[repeat(8,301px)] font-['Liberation_Serif',serif] text-[32px] leading-[34px] font-bold text-[#a04030]/4">
        {STAMPS.map((visible, n) => (
          <p key={n} className="pt-[26px] text-center whitespace-nowrap">
            {visible && (
              <>
                zzvcom_2680
                <br />
                2024/01/19 10:17
              </>
            )}
          </p>
        ))}
      </div>
    </div>
  </div>
);

const App: React.FC = () => {
  return (
    <div className="relative flex h-screen flex-col overflow-hidden bg-[#e6e6e6] font-['Noto_Sans_CJK_SC',sans-serif]">
      <TitleTabs />
      <Ribbon />
      <FormulaBar />
      <main className="flex min-h-0 flex-1">
        <Sheet />
        <VerticalScroll />
      </main>
      <SheetTabs />
      <InputMethodBar />
      <Watermark />
    </div>
  );
};

export default App;
